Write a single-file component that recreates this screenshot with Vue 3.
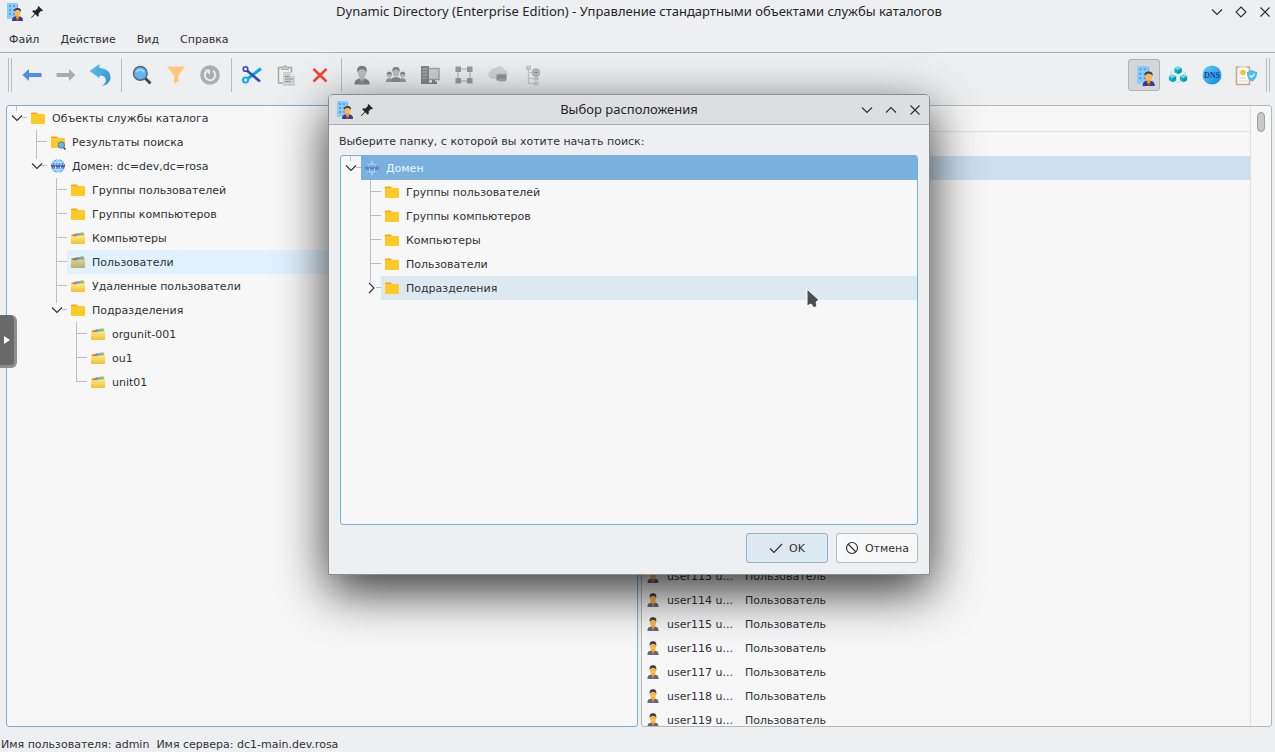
<script setup>
const menus = ['Файл', 'Действие', 'Вид', 'Справка']

const toolGroups = [
  [
    { icon: 'back', label: 'Назад' },
    { icon: 'forward', label: 'Вперёд', disabled: true },
    { icon: 'undo', label: 'На уровень вверх' }
  ],
  [
    { icon: 'search', label: 'Поиск' },
    { icon: 'filter', label: 'Фильтр', disabled: true },
    { icon: 'refresh', label: 'Обновить', disabled: true }
  ],
  [
    { icon: 'cut', label: 'Вырезать' },
    { icon: 'paste', label: 'Вставить', disabled: true },
    { icon: 'remove', label: 'Удалить' }
  ],
  [
    { icon: 'person', label: 'Создать пользователя', disabled: true },
    { icon: 'group', label: 'Создать группу', disabled: true },
    { icon: 'computer', label: 'Создать компьютер', disabled: true },
    { icon: 'nodes', label: 'Создать подразделение', disabled: true },
    { icon: 'printer', label: 'Создать принтер', disabled: true },
    { icon: 'addtree', label: 'Создать объект', disabled: true }
  ]
]

const modes = [
  { icon: 'objects', label: 'Объекты', active: true },
  { icon: 'cubes', label: 'Сайты' },
  { icon: 'dns', label: 'DNS', text: 'DNS' },
  { icon: 'policy', label: 'Политики' }
]

const catalog = [
  { depth: 0, text: 'Объекты службы каталога', icon: 'folder', toggle: 'open' },
  { depth: 1, text: 'Результаты поиска', icon: 'foundfolder' },
  { depth: 1, text: 'Домен: dc=dev,dc=rosa', icon: 'globe', toggle: 'open' },
  { depth: 2, text: 'Группы пользователей', icon: 'folder' },
  { depth: 2, text: 'Группы компьютеров', icon: 'folder' },
  { depth: 2, text: 'Компьютеры', icon: 'files' },
  { depth: 2, text: 'Пользователи', icon: 'files', state: 'current' },
  { depth: 2, text: 'Удаленные пользователи', icon: 'files' },
  { depth: 2, text: 'Подразделения', icon: 'folder', toggle: 'open' },
  { depth: 3, text: 'orgunit-001', icon: 'files' },
  { depth: 3, text: 'ou1', icon: 'files' },
  { depth: 3, text: 'unit01', icon: 'files', last: true }
]

const locations = [
  { depth: 0, text: 'Домен', icon: 'globe', toggle: 'open', state: 'selected' },
  { depth: 1, text: 'Группы пользователей', icon: 'folder' },
  { depth: 1, text: 'Группы компьютеров', icon: 'folder' },
  { depth: 1, text: 'Компьютеры', icon: 'folder' },
  { depth: 1, text: 'Пользователи', icon: 'folder' },
  { depth: 1, text: 'Подразделения', icon: 'folder', toggle: 'closed', state: 'hover' }
]

const firstUserRow = 18
const rows = Array.from({ length: 25 }, (_, i) =>
  i < firstUserRow
    ? { id: i, selected: i === 1 }
    : { id: i, name: `user${113 + i - firstUserRow} u...`, kind: 'Пользователь' }
)
</script>

<template>
  <div class="window">
    <svg class="sprite" aria-hidden="true">
      <defs>
        <linearGradient id="gUndo" x1="0" y1="0" x2="1" y2="1">
          <stop offset="0" stop-color="#5cc3ee" /><stop offset="1" stop-color="#2b8fd0" />
        </linearGradient>
        <linearGradient id="gFiles" x1="0" y1="0" x2="0" y2="1">
          <stop offset="0" stop-color="#ffe98a" /><stop offset="1" stop-color="#efc236" />
        </linearGradient>
        <linearGradient id="gDns" x1="0" y1="0" x2="1" y2="1">
          <stop offset="0" stop-color="#5ccdf5" /><stop offset="1" stop-color="#0a8be0" />
        </linearGradient>
      </defs>
      <symbol id="directory" viewBox="1 0 18 18">
        <rect x="1" y="0" width="10" height="16" fill="#90caf9" />
        <rect x="11" y="1" width="1" height="15" fill="#64b5f6" />
        <path d="M3 2h2v2H3zM7 2h2v2H7zM3 6h2v2H3zM7 6h2v2H7zM3 10h2v2H3zM7 10h2v2H7z" fill="#42a5f5" />
        <path d="M6 18c0-4 2-4.500 5.500-5 3.500.5 5.500 1 5.500 5z" fill="#303f9f" />
        <path d="M10 12h3v3l-1.500 2L10 15z" fill="#ff9800" />
        <ellipse cx="11.500" cy="9.500" rx="3" ry="3.600" fill="#ffb74d" />
        <path d="M8 9c-.4-3 1-4 3.500-4S15.500 6 15 9c-.8-1.500-2-2-3.500-2S9 7.500 8 9z" fill="#424242" />
        <path d="M10.900 15.500h1.200l.4 2.500h-2z" fill="#e53935" />
      </symbol>
      <symbol id="objects" viewBox="0 0 22 22">
        <use href="#directory" x="4" y="2" width="20" height="20" />
      </symbol>
      <symbol id="pin" viewBox="0 0 12 12">
        <path d="M7.500 0L12 4.500l-1 .8-1-.2-2.400 2.500.2 2.200-1 1-2.600-2.600L.6 12 0 11.400l3.600-3.700L1.200 5.200l1-1 2.200.2L6.900 2 6.700 1z" fill="#232629" />
      </symbol>
      <symbol id="back" viewBox="0 0 22 22">
        <path d="M1.500 11L8 5v4h12.500v4H8v4z" fill="#4a8fe2" />
      </symbol>
      <symbol id="forward" viewBox="0 0 22 22">
        <path d="M20.500 11L14 5v4H1.500v4H14v4z" fill="#ababab" />
      </symbol>
      <symbol id="undo" viewBox="0 0 22 22">
        <path d="M.5 7L10.500 0v4c7.500.5 11 4.500 11 9 0 4.500-3 8-8.500 9 3.500-2.500 4.500-5 3.500-7.500-.8-2-2.500-3-6-3V14z" fill="url(#gUndo)" />
      </symbol>
      <symbol id="search" viewBox="0 0 22 22">
        <path d="M14 14l5.500 5.500" stroke="#37474f" stroke-width="2.800" />
        <circle cx="9.300" cy="9.300" r="6.800" fill="#64b5f6" stroke="#5c6b73" stroke-width="1.600" />
        <path d="M5.500 8c1.500-3 6-3 7.500 0" fill="none" stroke="#bbdefb" stroke-width="1.400" />
      </symbol>
      <symbol id="filter" viewBox="0 0 22 22">
        <path d="M2 2.500h18l-6.500 9v5.500L9 20v-8.500z" fill="#ffc977" />
      </symbol>
      <symbol id="refresh" viewBox="0 0 22 22">
        <circle cx="11" cy="11" r="9.800" fill="#adadad" />
        <path d="M7.200 7.500A5.200 5.200 0 1 0 14 6.700" fill="none" stroke="#ececec" stroke-width="2" />
        <path d="M5.500 5.500h5.500v5.500z" fill="#ececec" />
      </symbol>
      <symbol id="cut" viewBox="0 0 22 22">
        <path d="M20 4.500L7 14.500" stroke="#03a9f4" stroke-width="3" />
        <path d="M4 5l15 12.500" stroke="#3949ab" stroke-width="2.600" />
        <circle cx="4.500" cy="5" r="2.300" fill="#eff0f1" stroke="#3949ab" stroke-width="1.600" />
        <circle cx="4.500" cy="16" r="2.600" fill="#eff0f1" stroke="#03a9f4" stroke-width="1.800" />
      </symbol>
      <symbol id="paste" viewBox="0 0 22 22">
        <path d="M3.500 3.500h13v15.500h-13z" fill="#ededee" stroke="#a8a8a8" stroke-width="1.500" />
        <path d="M6.500 5.500V3H8.500a1.500 1.500 0 0 1 3 0h2v2.500z" fill="#c8c8c8" stroke="#a5a5a5" stroke-width=".8" />
        <path d="M8 8h8l4 4v10H8z" fill="#cfcfcf" />
        <path d="M16 8v4h4z" fill="#ececec" />
        <path d="M10 12.500h4.500M10 15h8M10 17.500h5.500" stroke="#909090" />
      </symbol>
      <symbol id="remove" viewBox="0 0 22 22">
        <path d="M4.500 5l13 12.500M17.500 5l-13 12.500" stroke="#f44336" stroke-width="2.500" />
      </symbol>
      <symbol id="person" viewBox="0 0 22 22">
        <path d="M3.500 20.500c0-4.500 1.500-5 5.500-6h4c4 1 5.500 1.500 5.500 6z" fill="#858585" />
        <path d="M8.500 13h5v2L11 19l-2.500-4z" fill="#b8b8b8" />
        <ellipse cx="11" cy="8.500" rx="4.200" ry="5.500" fill="#bdbdbd" />
        <path d="M6.500 8.500C5.500 3.500 7.500 2 11 2s5.500 1.500 4.500 6.500C14.500 6 13 5.500 11 5.500S7.500 6 6.500 8.500z" fill="#7c7c7c" />
        <path d="M10.300 15.500h1.400l.6 5H9.700z" fill="#969696" />
      </symbol>
      <symbol id="group" viewBox="0 0 22 22">
        <path d="M5.500 18c0-4 2-4.600 5.500-5 3.500.4 5.500 1 5.500 5z" fill="#8e8e8e" />
        <path d="M1 18c0-3 1-3.600 3.500-4 1.500 0 2 .5 2 4zM21 18c0-3-1-3.600-3.500-4-1.500 0-2 .5-2 4z" fill="#9d9d9d" />
        <ellipse cx="11" cy="8.300" rx="3.200" ry="4.200" fill="#c0c0c0" />
        <circle cx="4.300" cy="11" r="2.500" fill="#bdbdbd" />
        <circle cx="17.700" cy="11" r="2.500" fill="#bdbdbd" />
        <path d="M7.500 8c-.7-4 1-5 3.500-5s4.200 1 3.500 5c-1-2-2-2.300-3.500-2.300S8.500 6 7.500 8zM1.800 11C1.500 8 3 7.700 4.300 7.700S7 8 6.800 11c-1-1.500-4-1.500-5 0zM15.200 11c-.2-3 1-3.300 2.500-3.300s2.700.3 2.500 3.300c-1-1.500-4-1.500-5 0z" fill="#858585" />
      </symbol>
      <symbol id="computer" viewBox="0 0 22 22">
        <path d="M8 4.500h12v11H8z" fill="#cfcfcf" stroke="#a0a0a0" stroke-width="1.400" />
        <path d="M13 16h3v1.500h2V20h-8v-1.500h3z" fill="#858585" />
        <path d="M2 2h8v18H2z" fill="#868686" />
        <path d="M3.500 5H8.500M3.500 8H8.500M3.500 11H8.500M3.500 14H7" stroke="#bdbdbd" />
      </symbol>
      <symbol id="nodes" viewBox="0 0 22 22">
        <path d="M5 5h12v12H5z" fill="none" stroke="#c0c0c0" stroke-width="1.500" />
        <path d="M2.500 2.500H8V8H2.500zM14 2.500h5.500V8H14zM2.500 14H8v5.500H2.500zM14 14h5.500v5.500H14z" fill="#9a9a9a" />
      </symbol>
      <symbol id="printer" viewBox="0 0 22 22">
        <path d="M5 15a4.500 4.500 0 0 1-1-8.500C5 3 8 4 8.500 4.500 10 1.500 16 1 17 5.500c4 .5 5 7-.5 9.500z" fill="#d3d3d3" />
        <path d="M11 9h8v3h-8z" fill="#c2c2c2" />
        <path d="M9.500 10.500H19.500v6H9.500z" fill="#929292" />
        <path d="M11.500 14.500h6.500v3h-6.500z" fill="#aaa" />
      </symbol>
      <symbol id="addtree" viewBox="0 0 22 22">
        <path d="M7.500 5v14.500H13M7.500 14.500H13M7.500 8.500H12" fill="none" stroke="#cacaca" stroke-width="1.200" />
        <path d="M5 1.500h5V6H5zM13 12.500h4.500v4H13zM13 17.500h4.500v4H13z" fill="#cbcbcb" />
        <circle cx="15" cy="8.500" r="3.300" fill="#e3e3e3" stroke="#a0a0a0" stroke-width="1.300" />
        <path d="M15 6.500v4M13 8.500h4" stroke="#8b8b8b" stroke-width="1.300" />
      </symbol>
      <symbol id="cubes" viewBox="0 0 22 22">
        <path d="M5.500 7C3.500 9 3 10.500 3.500 12M16.500 7c2 2 2.500 3.500 2 5M8 17.500q3 1.500 6 0" fill="none" stroke="#cfd8dc" stroke-width="1.200" />
        <path d="M11 2.500l3.600 1.800v4L11 10.200 7.400 8.300v-4zM5.500 10.500l3.600 1.800v4l-3.600 1.900-3.600-1.900v-4zM16.500 10.500l3.600 1.800v4l-3.600 1.900-3.600-1.900v-4z" fill="#12b3c6" />
        <path d="M11 2.500l3.600 1.800L11 6.200 7.400 4.300zM5.500 10.500l3.600 1.800-3.600 1.900-3.600-1.900zM16.500 10.500l3.600 1.800-3.600 1.900-3.600-1.900z" fill="#5fdde8" />
        <path d="M11 6.200v4l3.600-1.900v-4zM5.500 14.200v4l3.600-1.900v-4zM16.500 14.200v4l3.600-1.900v-4z" fill="#0a9aae" />
      </symbol>
      <symbol id="dns" viewBox="0 0 22 22">
        <circle cx="11" cy="11" r="9.500" fill="url(#gDns)" />
      </symbol>
      <symbol id="policy" viewBox="0 0 22 22">
        <path d="M1.500 3h13v17.500h-13z" fill="#fafafa" stroke="#dba27d" stroke-width="1.600" />
        <path d="M4 4V2.500h2.500C7 .5 9 .5 9.500 2.500H12V4z" fill="#dfe3e6" />
        <circle cx="8" cy="8.500" r="2.800" fill="#fbc02d" />
        <path d="M4 14h7M4 17h9" stroke="#cfd8dc" />
        <path d="M17 6.500c1.500 1 3 1.500 4.600 1.500 0 5-1.500 7.500-4.600 9-3.100-1.500-4.600-4-4.600-9 1.600 0 3.100-.5 4.600-1.500z" fill="#4fc3f7" stroke="#29a6de" stroke-width=".7" />
        <path d="M14.800 11.500l1.700 1.700 3-3" fill="none" stroke="#fff" stroke-width="1.200" />
      </symbol>
      <symbol id="folder" viewBox="0 0 16 16">
        <path d="M1 3.500c0-.6.400-1 1-1h4.500L8 4v3H1z" fill="#ffa000" />
        <path d="M1 5.200C1 4.500 1.400 4 2 4h12.200c.5 0 .8.400.8.900v8.200c0 .6-.4.900-.9.900H1.900c-.5 0-.9-.4-.9-.9z" fill="#ffca28" />
      </symbol>
      <symbol id="foundfolder" viewBox="0 0 16 16">
        <path d="M1 3.500c0-.6.400-1 1-1h4.500L8 4v3H1z" fill="#ffa000" />
        <path d="M1 4h13c.5 0 1 .4 1 .9V14H1z" fill="#ffca28" />
        <path d="M13 13l2.500 2.500" stroke="#37474f" stroke-width="1.500" />
        <circle cx="11.300" cy="11" r="3.200" fill="#64b5f6" stroke="#607d8b" />
      </symbol>
      <symbol id="files" viewBox="0 0 16 16">
        <path d="M1.500 4h13v5h-13z" fill="#f0b43c" />
        <path d="M3 5l4-2 1 3H3z" fill="#e2704a" />
        <path d="M6 3.800L11 3v3H6z" fill="#6c9be0" />
        <path d="M10 2.800l3.500-.6.500 2.800h-4z" fill="#8bc766" />
        <path d="M1 6.500h6l1-1h7V13c0 .6-.4 1-1 1H2c-.6 0-1-.4-1-1z" fill="url(#gFiles)" />
      </symbol>
      <symbol id="globe" viewBox="0 0 16 16">
        <circle cx="8" cy="8" r="6.800" fill="#42a5f5" />
        <path d="M8 1v14M2.500 4.200h11M2.500 11.800h11M8 1C3.500 5 3.500 11 8 15M8 1c4.500 4 4.500 10 0 14" fill="none" stroke="#e3f2fd" stroke-width=".9" />
        <path d="M1 6h14v4.200H1z" fill="#e3f2fd" fill-opacity=".75" />
        <path d="M1.200 6.500l1 3 1-2.500 1 2.500 1-3M6 6.500l1 3 1-2.500 1 2.500 1-3M10.800 6.500l1 3 1-2.500 1 2.500 1-3" fill="none" stroke="#3f51b5" stroke-width="1.100" />
      </symbol>
      <symbol id="user" viewBox="0 0 16 16">
        <path d="M2.500 15c0-3.500 1-3.800 4-4.500h3c3 .7 4 1 4 4.500z" fill="#546e7a" />
        <path d="M6.500 9h3v2.500L8 14l-1.500-2.500z" fill="#ff9800" />
        <path d="M7.500 12h1l.5 3H7z" fill="#d8577a" />
        <ellipse cx="8" cy="6.500" rx="3" ry="3.900" fill="#ffb74d" />
        <path d="M4.800 6C4.200 2.300 5.500 1.200 8 1.200S11.800 2.300 11.200 6C10.300 4 9.500 3.900 8 3.900S5.700 4 4.800 6z" fill="#424242" />
      </symbol>
      <symbol id="down" viewBox="0 0 12 12"><path d="M1 3.500l5 5 5-5" class="line" /></symbol>
      <symbol id="up" viewBox="0 0 12 12"><path d="M1 8.500l5-5 5 5" class="line" /></symbol>
      <symbol id="right" viewBox="0 0 12 12"><path d="M4 1l5 5-5 5" class="line" /></symbol>
      <symbol id="restore" viewBox="0 0 12 12"><path d="M6 1l5 5-5 5-5-5z" class="line" /></symbol>
      <symbol id="close" viewBox="0 0 12 12"><path d="M1.500 1.500l9 9M10.500 1.500l-9 9" class="line" /></symbol>
      <symbol id="check" viewBox="0 0 14 14"><path d="M1 7.500l4 4 8-8.500" class="line" /></symbol>
      <symbol id="cancel" viewBox="0 0 14 14"><path d="M3 3l8 8" class="line" /><circle cx="7" cy="7" r="5.500" class="line" /></symbol>
    </svg>

    <header class="titlebar">
      <span class="title-left">
        <svg class="i18"><use href="#directory" /></svg>
        <svg class="i12"><use href="#pin" /></svg>
      </span>
      <h1>Dynamic Directory (Enterprise Edition) - Управление стандартными объектами службы каталогов</h1>
      <span class="title-right">
        <button aria-label="Свернуть"><svg class="i12"><use href="#down" /></svg></button>
        <button aria-label="Восстановить"><svg class="i12"><use href="#restore" /></svg></button>
        <button aria-label="Закрыть"><svg class="i12"><use href="#close" /></svg></button>
      </span>
    </header>

    <nav class="menubar">
      <button v-for="m in menus" :key="m">{{ m }}</button>
    </nav>

    <div class="toolbar">
      <span class="grip"></span>
      <div v-for="(g, i) in toolGroups" :key="i" class="group">
        <button v-for="t in g" :key="t.icon" :aria-label="t.label" :disabled="t.disabled">
          <svg class="i22"><use :href="'#' + t.icon" /></svg>
        </button>
      </div>
      <div class="modes">
        <button v-for="t in modes" :key="t.icon" :aria-label="t.label" :class="{ active: t.active }">
          <svg class="i22" viewBox="0 0 22 22">
            <use :href="'#' + t.icon" />
            <text v-if="t.text" x="11" y="14" text-anchor="middle" class="badge">{{ t.text }}</text>
          </svg>
        </button>
      </div>
      <span class="grip"></span>
    </div>

    <main class="panes">
      <ul class="tree pane">
        <li v-for="n in catalog" :key="n.text" :class="['d' + n.depth, n.toggle, { last: n.last }]">
          <span class="branch">
            <svg v-if="n.toggle" class="i12"><use href="#down" /></svg>
          </span>
          <span class="node" :class="n.state">
            <svg class="i16"><use :href="'#' + n.icon" /></svg>
            <span class="caption">{{ n.text }}</span>
          </span>
        </li>
      </ul>

      <section class="list pane">
        <div class="listbody">
          <div class="listhead"></div>
          <table>
            <tbody>
              <tr v-for="r in rows" :key="r.id" :class="{ selected: r.selected }">
                <td class="name">
                  <span v-if="r.name" class="user">
                    <svg class="i16"><use href="#user" /></svg>
                    <span class="caption">{{ r.name }}</span>
                  </span>
                </td>
                <td><span class="caption">{{ r.kind }}</span></td>
              </tr>
            </tbody>
          </table>
        </div>
        <div class="scroll"><span class="thumb"></span></div>
      </section>
    </main>

    <footer class="status">
      <span>Имя пользователя: admin</span>
      <span>Имя сервера: dc1-main.dev.rosa</span>
    </footer>

    <button class="drawer" aria-label="Открыть панель">
      <svg viewBox="0 0 6 8"><path d="M0 0v8l6-4z" fill="#fff" /></svg>
    </button>

    <div class="dialog" role="dialog" aria-labelledby="dlgTitle">
      <header class="titlebar dlgbar">
        <span class="title-left">
          <svg class="i18"><use href="#directory" /></svg>
          <svg class="i12"><use href="#pin" /></svg>
        </span>
        <h2 id="dlgTitle">Выбор расположения</h2>
        <span class="title-right">
          <button aria-label="Свернуть"><svg class="i12"><use href="#down" /></svg></button>
          <button aria-label="Развернуть"><svg class="i12"><use href="#up" /></svg></button>
          <button aria-label="Закрыть"><svg class="i12"><use href="#close" /></svg></button>
        </span>
      </header>
      <div class="dlgbody">
        <p id="hint">Выберите папку, с которой вы хотите начать поиск:</p>
        <ul class="tree choice" aria-labelledby="hint">
          <li v-for="n in locations" :key="n.text" :class="['d' + n.depth, n.toggle]">
            <span class="branch">
              <svg v-if="n.toggle" class="i12"><use :href="n.toggle === 'open' ? '#down' : '#right'" /></svg>
            </span>
            <span class="node" :class="n.state">
              <svg class="i16"><use :href="'#' + n.icon" /></svg>
              <span class="caption">{{ n.text }}</span>
            </span>
          </li>
        </ul>
        <div class="actions">
          <button class="ok"><svg class="i14"><use href="#check" /></svg><span class="caption">OK</span></button>
          <button><svg class="i14"><use href="#cancel" /></svg><span class="caption">Отмена</span></button>
        </div>
      </div>
    </div>

    <svg class="cursor" viewBox="0 0 14 22">
      <path d="M1 1v17l4-2 3 4 3-2-1-4 3-2z" fill="#4d4d4d" stroke="#fff" />
    </svg>
  </div>
</template>

<style>
body {
  margin: 0;
  background: #eff0f1;
}
.line {
  fill: none;
  stroke: #2b2e31;
  stroke-width: 1.1;
}
</style>

<style scoped>
.window {
  position: relative;
  display: flex;
  flex-direction: column;
  box-sizing: border-box;
  height: 100vh;
  overflow: hidden;
  background: #eeeff1;
  color: #2f3235;
  font: 11px/24px "DejaVu Sans", sans-serif;
}
.sprite {
  position: absolute;
  width: 0;
  height: 0;
}
svg { flex: none; display: block; }
.i12 { width: 12px; height: 12px; }
.i14 { width: 14px; height: 14px; }
.i16 { width: 16px; height: 16px; }
.i18 { width: 18px; height: 18px; }
.i22 { width: 22px; height: 22px; }
.badge {
  font: bold 8px "Liberation Serif", serif;
  fill: #283593;
}
button {
  padding: 0;
  border: 0;
  background: none;
  color: inherit;
  font: inherit;
}
ul, p, h1, h2 {
  margin: 0;
  padding: 0;
  list-style: none;
}
.caption {
  display: block;
  padding-top: 2px;
  line-height: 20px;
}
.titlebar {
  display: grid;
  grid-template-columns: 72px 1fr 72px;
  align-items: center;
  height: 24px;
  padding: 0 4px 0 7px;
}
.titlebar h1, .titlebar h2 {
  padding-bottom: 2px;
  color: #232629;
  font: 13px/22px "Noto Sans", sans-serif;
  text-align: center;
  white-space: nowrap;
}
.title-left, .title-right {
  display: flex;
  align-items: center;
}
.title-left { gap: 6px; }
.title-right {
  justify-content: flex-end;
  gap: 12px;
}
.menubar {
  display: flex;
  gap: 21px;
  height: 25px;
  padding: 3px 0 0 9px;
  border-bottom: 1px solid #afb0b2;
  line-height: 25px;
}
.toolbar {
  display: flex;
  align-items: center;
  height: 44px;
  padding: 0 5px 0 8px;
}
.grip {
  width: 2px;
  height: 34px;
  border: solid #bbbcbe;
  border-width: 0 1px;
}
.group {
  display: flex;
  align-items: center;
  gap: 2px;
  height: 34px;
  padding: 0 5px 0 4px;
  border-right: 1px solid #bbbcbe;
}
.group:nth-of-type(4) { border: 0; }
.modes {
  display: flex;
  gap: 2px;
  margin-left: auto;
  padding-right: 4px;
}
.toolbar button {
  display: grid;
  place-items: center;
  box-sizing: border-box;
  width: 32px;
  height: 32px;
}
.toolbar .active {
  border: 1px solid #b1b2b4;
  border-radius: 3px;
  background: #d5d6d8;
}
.panes {
  display: grid;
  grid-template-columns: 632fr 631fr;
  flex: 1;
  gap: 3px;
  min-height: 0;
  padding: 8px 3px 0 6px;
}
.pane {
  box-sizing: border-box;
  min-height: 0;
  overflow: hidden;
  border: 1px solid #b7b9bb;
  border-radius: 3px;
  background: #f7f7f7;
}
.tree { border: 1px solid #75b1dc; }
.tree li {
  display: flex;
  height: 24px;
}
.d1 { padding-left: 20px; }
.d2 { padding-left: 40px; }
.d3 { padding-left: 60px; }
.branch {
  position: relative;
  flex: none;
  width: 20px;
}
.branch::before, .branch::after {
  position: absolute;
  background: #bdbebf;
  content: "";
}
.branch::before {
  top: 0;
  left: 9px;
  width: 1px;
  height: 24px;
}
.branch::after {
  top: 11px;
  right: 0;
  width: 10px;
  height: 1px;
}
.open .branch::before, .closed .branch::before { height: 5px; }
.open .branch::after, .closed .branch::after { width: 5px; }
.last .branch::before { height: 12px; }
.branch svg {
  position: absolute;
  top: 6px;
  left: 4px;
}
.node {
  display: flex;
  flex: 1;
  align-items: center;
  gap: 6px;
  padding-left: 3px;
  white-space: nowrap;
}
.current { background: #e1f1fd; }
.current svg { filter: saturate(0.6) brightness(0.9) hue-rotate(10deg); }
.selected { background: #7ab1dc; }
.node.selected { color: #eef5fb; }
.node.selected svg { opacity: 0.6; }
.hover { background: #dde9f1; }
.list { display: flex; }
.listbody {
  flex: 1;
  overflow: hidden;
}
.listhead {
  height: 25px;
  border-bottom: 1px solid #dfe0e0;
}
table {
  width: 100%;
  border-collapse: collapse;
  table-layout: fixed;
}
tr.selected { background: #cddfed; }
td {
  height: 24px;
  padding: 0;
  white-space: nowrap;
}
.name { width: 103px; }
.user {
  display: flex;
  align-items: center;
  gap: 6px;
  padding-left: 3px;
}
.scroll {
  width: 20px;
  padding-top: 6px;
  border-left: 1px solid #dfe0e0;
}
.thumb {
  display: block;
  box-sizing: border-box;
  width: 8px;
  height: 20px;
  margin-left: 6px;
  border: 1px solid #9fa1a2;
  border-radius: 4px;
  background: #c7c8c9;
}
.status {
  display: flex;
  gap: 7px;
  height: 25px;
  padding-left: 1px;
  line-height: 36px;
}
.drawer {
  position: absolute;
  top: 315px;
  left: 0;
  display: grid;
  align-items: center;
  width: 17px;
  height: 53px;
  padding-left: 4px;
  box-sizing: border-box;
  border: solid #8d8d8d;
  border-width: 0 3px 3px 0;
  border-radius: 0 6px 6px 0;
  background: #696969;
}
.drawer svg {
  width: 6px;
  height: 8px;
}
.dialog {
  position: absolute;
  top: 94px;
  left: 328px;
  box-sizing: border-box;
  width: 602px;
  border: 1px solid #8b8c8e;
  border-radius: 5px 5px 0 0;
  background: #eeeff1;
  box-shadow: 0 16px 50px rgba(0, 0, 0, 0.8);
}
.dlgbar {
  height: 29px;
  border-bottom: 1px solid #acadaf;
  border-radius: 4px 4px 0 0;
  background: #dddee0;
}
.dlgbar.titlebar { padding: 0 8px; }
.dlgbody {
  padding: 5px 11px 11px;
}
.dlgbody p {
  height: 25px;
  margin-left: -1px;
}
.choice {
  height: 368px;
  overflow: hidden;
  border-radius: 3px;
  background: #f7f7f7;
}
.actions {
  display: flex;
  justify-content: flex-end;
  gap: 8px;
  padding-top: 8px;
}
.actions button {
  display: flex;
  align-items: center;
  justify-content: center;
  gap: 6px;
  box-sizing: border-box;
  width: 82px;
  height: 30px;
  border: 1px solid #b9babb;
  border-radius: 3px;
  background: #f8f8f8;
}
.actions .ok {
  border-color: #8fb1ca;
  background: #dde9f1;
}
.cursor {
  position: absolute;
  top: 288px;
  left: 806px;
  width: 14px;
  height: 22px;
}
</style>
